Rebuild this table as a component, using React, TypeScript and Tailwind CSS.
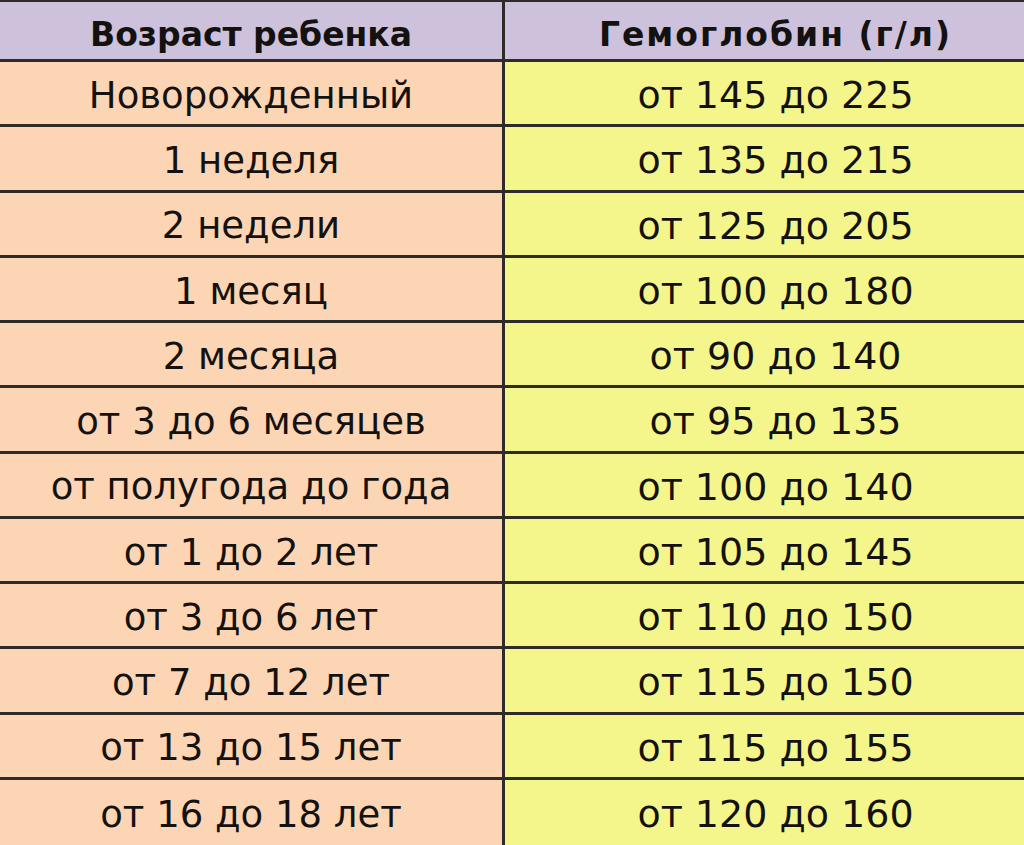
import React from 'react';

const rows: [string, string][] = [
  ['Новорожденный', 'от 145 до 225'],
  ['1 неделя', 'от 135 до 215'],
  ['2 недели', 'от 125 до 205'],
  ['1 месяц', 'от 100 до 180'],
  ['2 месяца', 'от 90 до 140'],
  ['от 3 до 6 месяцев', 'от 95 до 135'],
  ['от полугода до года', 'от 100 до 140'],
  ['от 1 до 2 лет', 'от 105 до 145'],
  ['от 3 до 6 лет', 'от 110 до 150'],
  ['от 7 до 12 лет', 'от 115 до 150'],
  ['от 13 до 15 лет', 'от 115 до 155'],
  ['от 16 до 18 лет', 'от 120 до 160'],
];

const App: React.FC = () => {
  return (
    <div
      className="w-[1024px] h-[845px] overflow-hidden bg-[#fcd5b4] text-[#141210]"
      style={{ fontFamily: '"DejaVu Sans", "Noto Sans", sans-serif' }}
    >
      <div className="grid grid-cols-[505px_1fr]">
        <div className="h-[62px] flex items-center justify-center pt-[8px] bg-[#cdc1dc] border-t-2 border-b-[3px] border-r-[3px] border-[#2f2b28] text-[33px] font-bold">
          Возраст ребенка
        </div>
        <div className="h-[62px] flex items-center justify-center pt-[8px] pl-[22px] bg-[#cdc1dc] border-t-2 border-b-[3px] border-[#2f2b28] text-[33px] font-bold tracking-[2px]">
          Гемоглобин (г/л)
        </div>
        {rows.map(([age, hb], i) => {
          const last = i === rows.length - 1;
          return (
            <React.Fragment key={i}>
              <div
                className={
                  last
                    ? 'h-[65.25px] flex items-center justify-center pt-[5px] bg-[#fcd5b4] border-r-[3px] border-[#2f2b28] text-[37px]'
                    : 'h-[65.25px] flex items-center justify-center pt-[5px] bg-[#fcd5b4] border-b-[3px] border-r-[3px] border-[#2f2b28] text-[37px]'
                }
              >
                {age}
              </div>
              <div
                className={
                  last
                    ? 'h-[65.25px] flex items-center justify-center pt-[5px] pl-[22px] bg-[#f4f68c] text-[38px]'
                    : 'h-[65.25px] flex items-center justify-center pt-[5px] pl-[22px] bg-[#f4f68c] border-b-[3px] border-[#2f2b28] text-[38px]'
                }
              >
                {hb}
              </div>
            </React.Fragment>
          );
        })}
      </div>
    </div>
  );
};

export default App;
